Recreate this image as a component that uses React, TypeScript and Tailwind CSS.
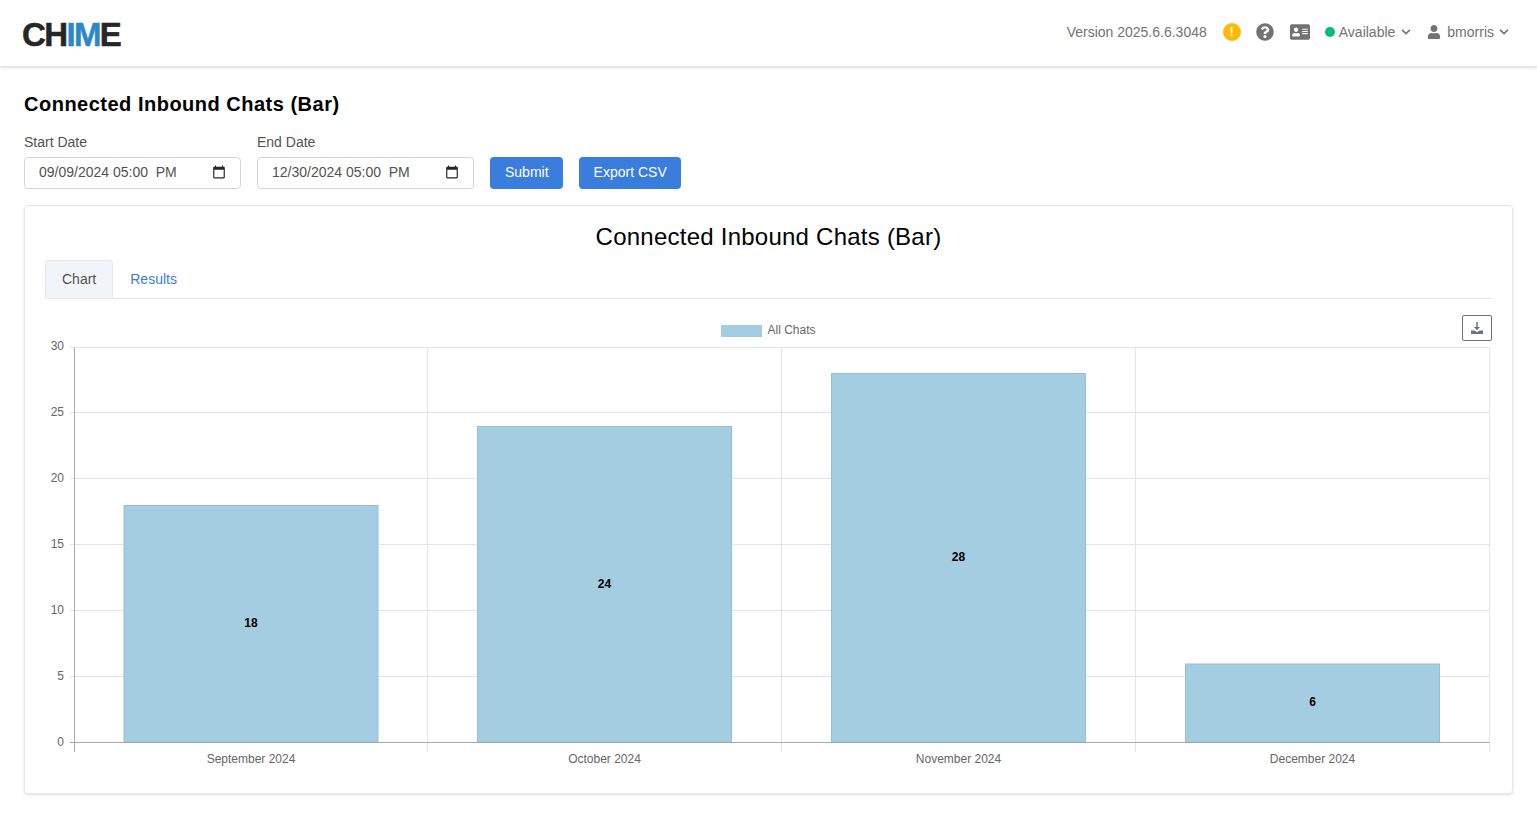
import React from 'react';
import { FaAddressCard, FaChevronDown, FaQuestionCircle, FaUser } from 'react-icons/fa';

const gridY = [
  { y: 347.5, labelY: 350, label: '30' },
  { y: 412.5, labelY: 416, label: '25' },
  { y: 478.5, labelY: 482, label: '20' },
  { y: 544.5, labelY: 548, label: '15' },
  { y: 610.5, labelY: 614, label: '10' },
  { y: 676.5, labelY: 680, label: '5' },
];

const gridX = [427.5, 781.5, 1135.5, 1489.5];

const bars = [
  { x: 124, top: 505.5, value: 18, month: 'September 2024' },
  { x: 477.5, top: 426.5, value: 24, month: 'October 2024' },
  { x: 831.5, top: 373.5, value: 28, month: 'November 2024' },
  { x: 1185.5, top: 664, value: 6, month: 'December 2024' },
];

const Chart: React.FC = () => (
  <svg viewBox="45 310 1447 465" className="block w-full h-[465px] font-['Liberation_Sans',sans-serif]">
    {/* Legend */}
    <rect x="721" y="325" width="41" height="12" fill="#a5cde1" />
    <text x="767.5" y="334" fontSize="12" fill="#666">All Chats</text>

    {/* Grid */}
    {gridY.map((g) => (
      <g key={g.label}>
        <line x1="70" x2="1489.5" y1={g.y} y2={g.y} stroke="#e5e5e5" />
        <text x="64" y={g.labelY} textAnchor="end" fontSize="12" fill="#666">{g.label}</text>
      </g>
    ))}
    {gridX.map((x) => (
      <line key={x} x1={x} x2={x} y1="347.5" y2="752" stroke="#e5e5e5" />
    ))}

    {/* Bars */}
    {bars.map((b) => (
      <g key={b.month}>
        <rect x={b.x} y={b.top} width="254" height={742 - b.top} fill="#a5cde1" stroke="#93bfd8" />
        <text x={b.x + 127} y={(b.top + 742) / 2 + 3.25} textAnchor="middle" fontSize="12" fontWeight="700" fill="#000">
          {b.value}
        </text>
        <text x={b.x + 127} y="763" textAnchor="middle" fontSize="12" fill="#666">{b.month}</text>
      </g>
    ))}

    {/* Axes */}
    <line x1="74.5" x2="74.5" y1="347.5" y2="752" stroke="#a8a8a8" />
    <line x1="70" x2="1489.5" y1="742.5" y2="742.5" stroke="#a8a8a8" />
    <text x="64" y="746" textAnchor="end" fontSize="12" fill="#666">0</text>
  </svg>
);

const Header: React.FC = () => (
  <header className="h-[67px] flex items-center justify-between pl-5.5 pr-7 border-b border-gray-200 shadow-sm">
    <div className="mt-0.5 text-[33px] font-bold tracking-tighter text-neutral-800 leading-none [-webkit-text-stroke:0.5px_currentColor]">
      CH<span className="text-[#2b88c9]">IM</span>E
    </div>
    <div className="flex items-center gap-4 text-sm text-neutral-500 -mt-0.5">
      <span>Version 2025.6.6.3048</span>
      <span className="w-4.5 h-4.5 rounded-full bg-amber-400 text-white text-xs font-bold flex items-center justify-center">!</span>
      <FaQuestionCircle className="w-4.5 h-4.5 -ml-px" />
      <FaAddressCard className="w-5 h-5" />
      <div className="flex items-center gap-1 -ml-px">
        <span className="w-2.5 h-2.5 rounded-full bg-emerald-500" />
        <span>Available</span>
        <FaChevronDown className="w-2.5 h-2.5 ml-0.5" />
      </div>
      <div className="flex items-center gap-1.5">
        <FaUser className="w-3.5 h-3.5" />
        <span>bmorris</span>
        <FaChevronDown className="w-2.5 h-2.5 -ml-px" />
      </div>
    </div>
  </header>
);

const DateField: React.FC<{ label: string; value: string }> = ({ label, value }) => (
  <label className="flex flex-col gap-1.5 w-[217px] text-sm leading-4.5 text-neutral-600">
    {label}
    <div className="h-8 pl-3.5 pr-3.5 pb-0.5 flex items-center border border-gray-300 rounded bg-white">
      <input type="text" readOnly value={value} className="flex-1 min-w-0 outline-none text-sm text-neutral-600" />
      <svg viewBox="0 0 24 24" className="w-3.5 h-3.5 shrink-0 fill-neutral-800">
        <path d="M20 3h-1V1h-2v2H7V1H5v2H4c-1.1 0-2 .9-2 2v16c0 1.1.9 2 2 2h16c1.1 0 2-.9 2-2V5c0-1.1-.9-2-2-2zm0 18H4V8h16v13z" />
      </svg>
    </div>
  </label>
);

export default function App() {
  return (
    <div className="min-h-screen bg-white font-['Liberation_Sans',sans-serif]">
      <Header />
      <main className="px-6 pt-6">
        <h1 className="text-xl font-bold tracking-wide text-black leading-6.5">Connected Inbound Chats (Bar)</h1>
        <div className="flex items-end gap-4 mt-4">
          <DateField label="Start Date" value="09/09/2024 05:00  PM" />
          <DateField label="End Date" value="12/30/2024 05:00  PM" />
          <button className="h-8 pl-3.75 pr-3.5 pb-0.5 rounded bg-[#3b7ddd] text-white text-sm">Submit</button>
          <button className="h-8 pl-3.75 pr-3.5 pb-0.5 rounded bg-[#3b7ddd] text-white text-sm">Export CSV</button>
        </div>
        <section className="mt-4 px-5 pt-3 pb-4.5 border border-gray-200 rounded shadow-sm">
          <h2 className="text-2xl text-center tracking-[0.01em] text-black leading-9.5">Connected Inbound Chats (Bar)</h2>
          <div className="flex mt-1 border-b border-gray-200 text-sm h-[39px]">
            <div className="px-4 pb-0.5 flex items-center border border-b-0 border-gray-200 rounded-t bg-slate-100 text-neutral-600">Chart</div>
            <div className="px-4 pb-0.5 flex items-center border border-b-0 border-transparent text-[#3b7ddd]">Results</div>
          </div>
          <div className="relative mt-[11px]">
            <Chart />
            <button className="absolute top-[5px] right-0 w-[30px] h-[26px] flex items-center justify-center border border-gray-500 rounded-xs bg-white text-gray-500">
              <svg viewBox="0 0 12 12" className="w-3 h-3 fill-current">
                <path d="M5.25 0h1.5v5H9L6 8.2 3 5h2.25z" />
                <path d="M0 8.5h3.2L6 10l2.8-1.5H12V12H0z" />
              </svg>
            </button>
          </div>
        </section>
      </main>
    </div>
  );
}
